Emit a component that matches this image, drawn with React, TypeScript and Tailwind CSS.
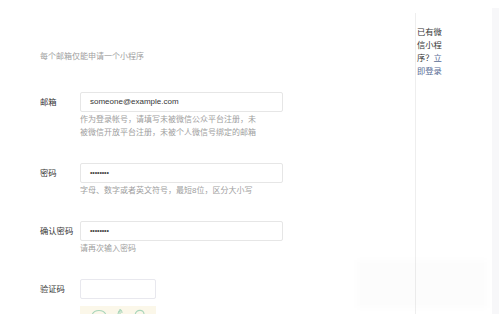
const font = "font-['Liberation_Sans','Noto_Sans_CJK_SC',sans-serif]";

type Row = {
  label: string;
  value?: string;
  dots?: boolean;
  help: string[];
};

const rows: Row[] = [
  {
    label: "邮箱",
    value: "someone@example.com",
    help: ["作为登录帐号，请填写未被微信公众平台注册，未", "被微信开放平台注册，未被个人微信号绑定的邮箱"],
  },
  { label: "密码", dots: true, help: ["字母、数字或者英文符号，最短8位，区分大小写"] },
  { label: "确认密码", dots: true, help: ["请再次输入密码"] },
];

function FieldRow({ row }: { row: Row }) {
  return (
    <div className="flex mb-[24px]">
      <div className="w-[40px] shrink-0 text-[8.3px] leading-[20px] text-[#353535]">{row.label}</div>
      <div className="w-[203px]">
        <div className="flex h-[20px] items-center rounded-[2px] border border-[#e6e6e6] bg-white pl-[9px] text-[8px] text-[#353535]">
          {row.dots ? <span className="text-[7px] tracking-[-0.1px] text-[#444]">••••••••</span> : row.value}
        </div>
        <div className="mt-[1px] text-[8px] leading-[13px] text-[#9e9e9e]">
          {row.help.map((line) => (
            <div key={line} className="whitespace-nowrap">{line}</div>
          ))}
        </div>
      </div>
    </div>
  );
}

export default function App() {
  return (
    <div className={`relative h-[331px] w-[499px] overflow-hidden bg-white ${font}`}>
      <div className="flex h-[314px]">
        <section className="mt-[13px] w-[416px] shrink-0 overflow-hidden border-r border-[#eeeeee] pl-[40px] pt-[37px]">
          <div className="text-[8px] leading-[13px] text-[#a0a0a0]">每个邮箱仅能申请一个小程序</div>
          <div className="mt-[29px]">
            {rows.map((row) => (
              <FieldRow key={row.label} row={row} />
            ))}
            <div className="flex">
              <div className="w-[40px] shrink-0 text-[8.3px] leading-[20px] text-[#353535]">验证码</div>
              <div>
                <div className="h-[20px] w-[76px] rounded-[2px] border border-[#e8e8ee] bg-white" />
                <div className="mt-[7px] h-[30px] w-[76px] bg-[#fbf7e9]">
                  <svg width="76" height="30" viewBox="0 0 76 30" fill="none" stroke="#a9d6bb" strokeWidth="1.1">
                    <path d="M12 9 C14 3, 24 3, 26 9" />
                    <path d="M38 9 C38 4, 42 2, 42 7 M40 3 L40 9" />
                    <path d="M55 9 C56 3, 64 3, 64 8" />
                  </svg>
                </div>
              </div>
            </div>
          </div>
        </section>
        <aside className="mt-[13px] w-[27px] shrink-0 pl-[1px] pt-[13px] text-[8.3px] leading-[13px] text-[#353535]">
          <div>已有微</div>
          <div>信小程</div>
          <div>
            序？<span className="text-[#576b95]">立</span>
          </div>
          <div className="text-[#576b95]">即登录</div>
        </aside>
        <div className="ml-auto mt-[8px] w-[7px] bg-[#f7f7f9]" />
      </div>
      <div className="absolute left-[357px] top-[260px] h-[48px] w-[130px] bg-black/[0.012] blur-[3px]" />
    </div>
  );
}
